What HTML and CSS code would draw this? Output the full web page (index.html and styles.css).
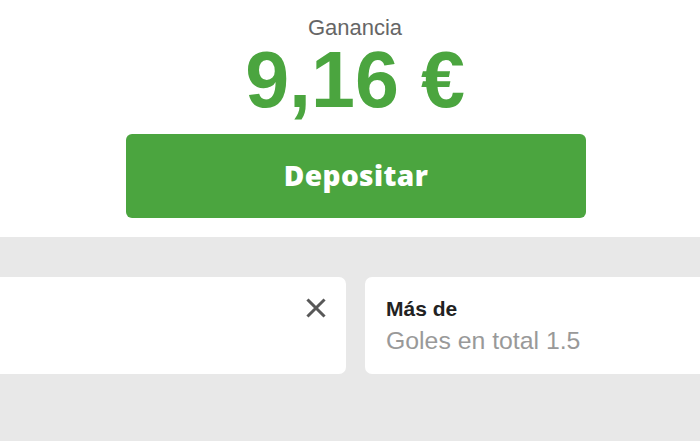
FILE: index.html
```html
<!DOCTYPE html>
<html lang="es">
<head>
<meta charset="utf-8">
<link rel="stylesheet" href="styles.css">
</head>
<body>
<section class="summary">
  <div class="label">Ganancia</div>
  <div class="amount">9,16 €</div>
  <button class="deposit">Depositar</button>
</section>
<section class="slips">
  <div class="track">
    <div class="card card-first">
      <svg class="close" viewBox="0 0 20 20" width="20" height="20" aria-hidden="true">
        <path d="M2.5 2.5 L17.5 17.5 M17.5 2.5 L2.5 17.5" stroke="#585858" stroke-width="3" stroke-linecap="square" fill="none"/>
      </svg>
    </div>
    <div class="card">
      <div class="card-title">Más de</div>
      <div class="card-sub">Goles en total 1.5</div>
    </div>
  </div>
</section>
</body>
</html>
```
FILE: styles.css
```css
html, body {
  margin: 0;
  padding: 0;
}
body {
  width: 700px;
  height: 441px;
  overflow: hidden;
  background: #e8e8e8;
  font-family: "Liberation Sans", Arial, sans-serif;
}
.summary {
  background: #ffffff;
  height: 237px;
  box-sizing: border-box;
  padding-top: 18px;
  padding-left: 10px;
  display: flex;
  flex-direction: column;
  align-items: center;
}
.label {
  font-size: 22px;
  line-height: 19px;
  color: #666666;
}
.amount {
  font-size: 79px;
  font-weight: 700;
  line-height: 85px;
  color: #4ba53f;
}
.deposit {
  margin-top: 12px;
  margin-left: 2px;
  width: 460px;
  height: 84px;
  border: none;
  border-radius: 6px;
  background: #4ba53f;
  color: #ffffff;
  font-family: "Open Sans", sans-serif;
  font-weight: 800;
  font-size: 28px;
  letter-spacing: 0.4px;
  padding: 0;
  padding-bottom: 2px;
}
.slips {
  padding-top: 40px;
  overflow: hidden;
}
.track {
  display: flex;
  gap: 19px;
  margin-left: -54px;
}
.card {
  flex: 0 0 400px;
  height: 97px;
  background: #ffffff;
  border-radius: 7px;
  box-sizing: border-box;
  padding: 19px 21px;
}
.card-first {
  display: flex;
  justify-content: flex-end;
  align-items: flex-start;
  padding: 21px 20px;
}
.close {
  display: block;
}
.card-title {
  font-size: 21px;
  font-weight: 700;
  color: #222222;
  line-height: 26px;
}
.card-sub {
  font-size: 24.8px;
  color: #999999;
  line-height: 30px;
  margin-top: 4px;
}
```
